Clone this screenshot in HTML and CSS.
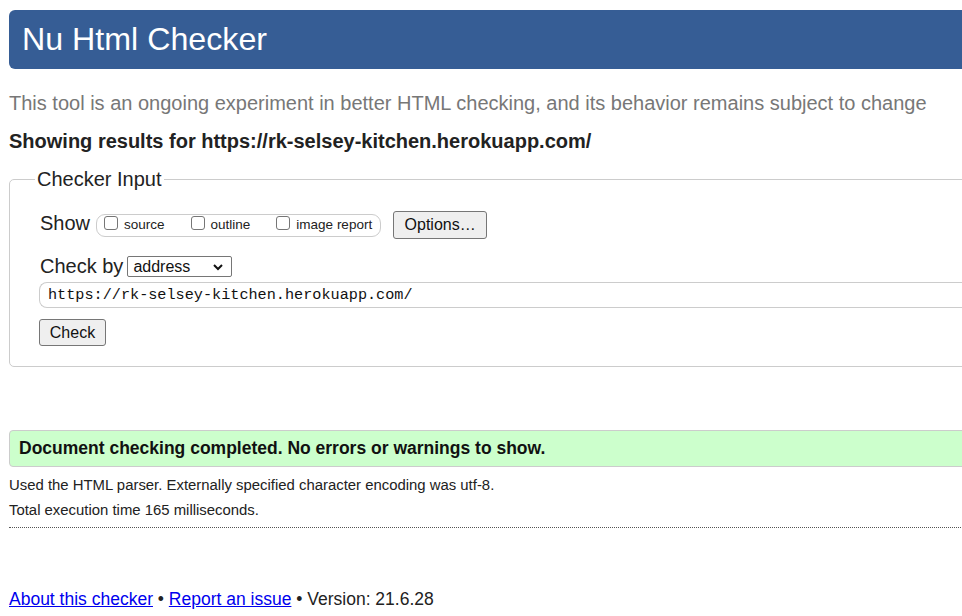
FILE: index.html
```html
<!DOCTYPE html>
<html lang="en">
<head>
<meta charset="utf-8">
<title>Nu Html Checker</title>
<link rel="stylesheet" href="styles.css">
</head>
<body>
<div class="page">
  <h1 class="banner">Nu Html Checker</h1>
  <p class="intro">This tool is an ongoing experiment in better HTML checking, and its behavior remains subject to change</p>
  <h2 class="results">Showing results for https://rk-selsey-kitchen.herokuapp.com/</h2>

  <fieldset class="input-set">
    <legend class="input-legend">Checker Input</legend>
    <div class="row row-show">
      <span class="row-label show-label">Show</span>
      <div class="show-group">
        <label class="opt"><span class="cb"></span><span class="opt-text">source</span></label>
        <label class="opt"><span class="cb"></span><span class="opt-text">outline</span></label>
        <label class="opt"><span class="cb"></span><span class="opt-text">image report</span></label>
      </div>
      <span class="btn btn-options">Options…</span>
    </div>
    <div class="row row-checkby">
      <span class="row-label checkby-label">Check by</span>
      <span class="select">
        <span class="select-text">address</span>
        <svg class="chevron" width="10" height="7" viewBox="0 0 10 7"><polyline points="1,1 5,5 9,1" fill="none" stroke="#111" stroke-width="2"/></svg>
      </span>
    </div>
    <div class="url-input">https://rk-selsey-kitchen.herokuapp.com/</div>
    <div class="row-check"><span class="btn btn-check">Check</span></div>
  </fieldset>

  <div class="success">Document checking completed. No errors or warnings to show.</div>
  <p class="details">Used the HTML parser. Externally specified character encoding was utf-8.</p>
  <p class="details">Total execution time 165 milliseconds.</p>
  <hr class="dotted">

  <p class="footer"><a href="#">About this checker</a> • <a href="#">Report an issue</a> • Version: 21.6.28</p>
</div>
</body>
</html>
```
FILE: styles.css
```css
html, body {
  margin: 0;
  padding: 0;
  overflow: hidden;
  background: #fff;
}

body {
  font-family: "Liberation Sans", Arial, sans-serif;
  color: #222;
}

.page {
  width: 1010px;
  padding: 10px 0 0 9px;
}

.banner {
  margin: 0;
  height: 59px;
  line-height: 59px;
  padding: 0 13px;
  background: #365d95;
  color: #fff;
  font-size: 32.2px;
  font-weight: normal;
  border-radius: 6px;
}

.intro {
  margin: 22px 0 0;
  font-size: 20px;
  line-height: 24px;
  color: #777;
}

.results {
  margin: 14px 0 0;
  font-size: 20px;
  line-height: 24px;
  font-weight: bold;
  color: #222;
}

.input-set {
  margin: 15px 0 0;
  padding: 0 0 20px 29px;
  border: 1px solid #ccc;
  border-radius: 5px;
  min-width: 0;
}

.input-legend {
  padding: 0 2px;
  margin-left: -4px;
  font-size: 20px;
  line-height: 23px;
  color: #222;
}

.row {
  display: flex;
  align-items: center;
}

.row-show {
  margin-top: 20px;
  height: 28px;
}

.row-label {
  font-size: 20px;
  line-height: 20px;
}

.show-label {
  margin-bottom: 4px;
  margin-right: 6px;
  margin-left: 1px;
}

.show-group {
  display: flex;
  align-items: center;
  gap: 26px;
  height: 21px;
  padding: 0 8px 0 7px;
  border: 1px solid #ccc;
  border-radius: 9px;
}

.opt {
  display: flex;
  align-items: center;
  gap: 6px;
}

.cb {
  width: 12px;
  height: 12px;
  border: 1px solid #767676;
  border-radius: 3px;
  background: #fff;
  margin-bottom: 5px;
}

.opt-text {
  font-size: 13.5px;
  line-height: 16px;
}

.btn {
  display: inline-flex;
  align-items: center;
  justify-content: center;
  box-sizing: border-box;
  background: #efefef;
  border: 1px solid #767676;
  border-radius: 3px;
  font-size: 16px;
  color: #111;
}

.btn-options {
  margin-left: 12px;
  height: 28px;
  width: 94px;
}

.row-checkby {
  margin-top: 17px;
  height: 21px;
}

.checkby-label {
  margin-bottom: 2px;
  margin-right: 4px;
  margin-left: 1px;
}

.select {
  display: flex;
  align-items: center;
  justify-content: space-between;
  box-sizing: border-box;
  width: 105px;
  height: 21px;
  padding: 0 8px 0 5px;
  border: 1px solid #767676;
  border-radius: 2px;
  background: #fff;
  font-size: 16px;
  color: #111;
}

.chevron {
  display: block;
  margin-top: 1px;
}

.url-input {
  margin-top: 5px;
  height: 24px;
  line-height: 24px;
  padding-left: 8px;
  border: 1px solid #ccc;
  border-right: none;
  border-radius: 8px 0 0 8px;
  font-family: "Liberation Mono", "Courier New", monospace;
  font-size: 15.2px;
  color: #111;
}

.row-check {
  margin-top: 11px;
  display: flex;
}

.btn-check {
  width: 67px;
  height: 27px;
}

.success {
  margin-top: 63px;
  height: 35px;
  line-height: 35px;
  padding-left: 9px;
  background: #ccffcc;
  border: 1px solid #ccc;
  border-radius: 4px;
  font-size: 17.5px;
  font-weight: bold;
  color: #111;
}

.details {
  margin: 0;
  font-size: 14.9px;
  line-height: 25px;
  color: #222;
}

.success + .details {
  margin-top: 6px;
}

.dotted {
  margin: 4px 0 0;
  height: 0;
  border: none;
  border-top: 1px dotted #555;
}

.footer {
  margin: 60px 0 0;
  font-size: 17.5px;
  line-height: 22px;
  color: #222;
}

.footer a {
  color: #0000ee;
}
```
